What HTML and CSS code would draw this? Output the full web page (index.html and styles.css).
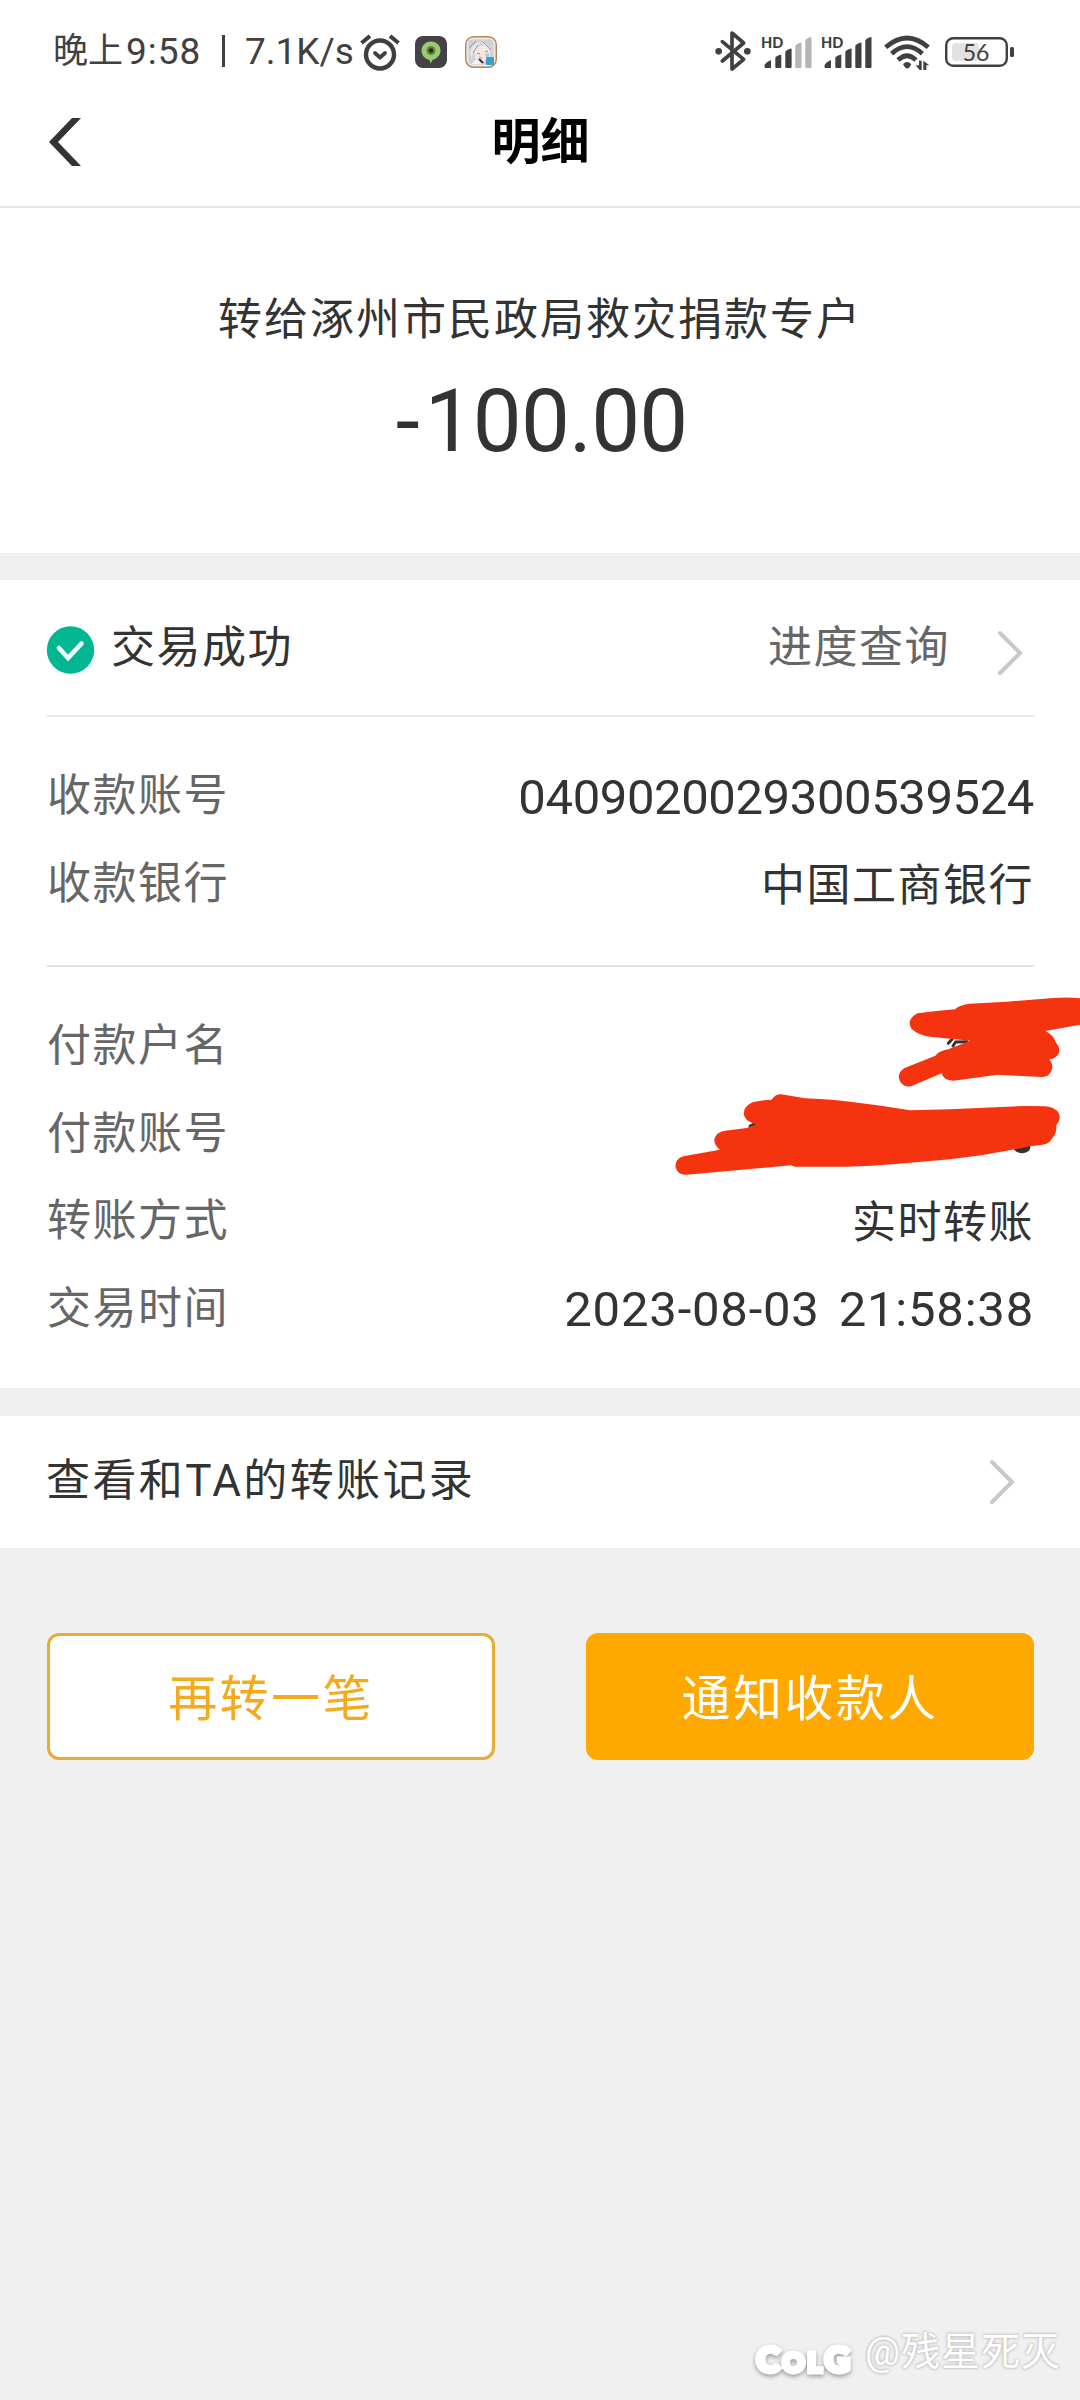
FILE: index.html
```
<!DOCTYPE html>
<html lang="zh-CN">
<head>
  <meta charset="UTF-8">
  <meta name="viewport" content="width=device-width, initial-scale=1.0">
  <title>明细</title>
  <link rel="stylesheet" href="styles.css">
</head>
<body>
  <div class="status">
    <span class="status-cn">晚上</span>
    <span class="status-time">9:58</span>
    <span class="status-sep"></span>
    <span class="status-speed">7.1K/s</span>
    <svg class="alarm" width="40" height="37" viewBox="0 0 40 37" fill="none" stroke="#404040" stroke-linecap="round" stroke-linejoin="round">
      <circle cx="20" cy="20.500" r="14" stroke-width="4.400"/>
      <path d="M15 19l5 4.500 5-4.500" stroke-width="3.800"/>
      <path d="M1.500 9l8.500-7M38.500 9l-8.500-7" stroke-width="4.200" stroke-linecap="butt"/>
    </svg>
    <svg class="app-map" width="32" height="32" viewBox="0 0 32 32">
      <rect width="32" height="32" rx="8" fill="#434246"/>
      <path d="M16 5.500c5.500 0 9.500 4 9.500 9 0 5.500-4 8-8 9.500l-2 3.500-1-3.500c-4.500-1-8-4.500-8-9.500 0-5 4-9 9.500-9z" fill="#9cc973"/>
      <circle cx="16" cy="14.500" r="4.500" fill="#5f8540"/>
      <circle cx="16" cy="14.500" r="2.200" fill="#1f2a1a"/>
    </svg>
    <svg class="app-avatar" width="32" height="32" viewBox="0 0 32 32">
      <rect x=".7" y=".7" width="30.600" height="30.600" rx="8" fill="#f3e6d6" stroke="#b08463" stroke-width="1.400"/>
      <rect x="3.500" y="3.500" width="25" height="25" rx="4" fill="#cfd0d8"/>
      <path d="M9 14q7-8 16-2v9q-7 9-15 1z" fill="#f7e6de"/>
      <path d="M5 17q2-9 10-11-2 7-7 9l-1 8zM17 6q8 2 9 11-6-3-9-11z" fill="#e9eaf0"/>
      <path d="M4 12l7-7M8 17l5-8M18 6l8 8M12 17l3 1M20 16l3-1" stroke="#9193a0" fill="none"/>
      <path d="M14 21l3 1" stroke="#d08a80"/>
      <path d="M7 28q2-5 7-5l4 5z" fill="#f1f3f8"/>
      <path d="M14 23l4 4" stroke="#2c2e38" stroke-width="2"/>
      <rect x="21" y="21" width="8" height="8" rx="1" fill="#36a2cc"/>
      <path d="M20 18l4-1v4h-3z" fill="#9fd0e4"/>
    </svg>

    <svg class="bluetooth" width="36" height="40" viewBox="105 95 108 120" fill="none" stroke="#404040" stroke-width="11" stroke-linecap="round" stroke-linejoin="round">
      <path d="M127 127l64 53-35 29V101l35 30-64 54"/>
      <circle cx="116" cy="156" r="10" fill="#404040" stroke="none"/>
      <circle cx="202" cy="156" r="10" fill="#404040" stroke="none"/>
    </svg>
    <svg class="signal" width="51" height="34" viewBox="0 0 51 34" fill="#404040">
      <text x="-1" y="12.500" class="hd">HD</text>
      <path d="M2.500 31q0-3 6.500-6v8H3.500q-1 0-1-1zM13.300 23q0-2 6-3.500v12.500q0 1-1 1h-4q-1 0-1-1zM23.300 17q1-2.500 6.300-3.500v18.500q0 1-1 1h-4.300q-1 0-1-1z"/>
      <path class="weak" d="M33.300 11q1-2.500 6.200-3.500v24.500q0 1-1 1h-4.200q-1 0-1-1zM43.300 5.500q1-2.500 6.200-3.500v30q0 1-1 1h-4.200q-1 0-1-1z"/>
    </svg>
    <svg class="signal second" width="51" height="34" viewBox="0 0 51 34" fill="#404040">
      <text x="-1" y="12.500" class="hd">HD</text>
      <path d="M2.500 31q0-3 6.500-6v8H3.500q-1 0-1-1zM13.300 23q0-2 6-3.500v12.500q0 1-1 1h-4q-1 0-1-1zM23.300 17q1-2.500 6.300-3.500v18.500q0 1-1 1h-4.300q-1 0-1-1z"/>
      <path d="M33.300 11q1-2.500 6.200-3.500v24.500q0 1-1 1h-4.200q-1 0-1-1zM43.300 5.500q1-2.500 6.200-3.500v30q0 1-1 1h-4.200q-1 0-1-1z"/>
    </svg>
    <svg class="wifi" width="46" height="36" viewBox="614 105 138 108" fill="none" stroke="#404040" stroke-width="14">
      <path d="M619 142q64-56 128 0M637 161q46-42 92 0M656 180q27-26 54 0"/>
      <path d="M671 193q12-14 25 0l-6 9q-6 7-13 0z" fill="#404040" stroke="none"/>
      <path d="M709 196h10v-14h8v28h-6zM732 182l18 14h-9v14h-9z" fill="#404040" stroke="none"/>
    </svg>
    <svg class="battery" width="70" height="32" viewBox="0 0 70 32">
      <rect x="7" y="7" width="27" height="18" rx="3" fill="#e2e2e2"/>
      <rect x="1.200" y="2.200" width="60.600" height="27.600" rx="7" fill="none" stroke="#404040" stroke-width="2.400"/>
      <rect x="65" y="11" width="4" height="10" rx="1.500" fill="#404040"/>
      <text x="31" y="24.500" text-anchor="middle" class="level">56</text>
    </svg>
  </div>

  <header class="nav">
    <svg class="back" width="32" height="48" viewBox="0 0 32 48">
      <path d="M23 0h9L9 24l23 24h-9L0 24z" fill="#333"/>
    </svg>
    <h1>明细</h1>
  </header>

  <main>
    <section class="summary">
      <p class="payee">转给涿州市民政局救灾捐款专户</p>
      <p class="amount"><span class="minus">-</span>100.00</p>
    </section>

    <section class="detail">
      <div class="state">
        <svg class="ok" width="48" height="48" viewBox="0 0 48 48">
          <circle cx="23.500" cy="24" r="23.700" fill="#00b791"/>
          <path d="M12 22l9 10L34.500 17.500" fill="none" stroke="#effffb" stroke-width="4.600" stroke-linecap="round"/>
        </svg>
        <span class="state-text">交易成功</span>
        <span class="progress">进度查询</span>
        <svg class="arrow" width="24" height="44" viewBox="0 0 24 44">
          <path d="M2 2l20 20L2 42" fill="none" stroke="#c8c8c8" stroke-width="4" stroke-linecap="round"/>
        </svg>
      </div>

      <dl class="rows receiver">
        <div><dt>收款账号</dt><dd class="num">0409020029300539524</dd></div>
        <div><dt>收款银行</dt><dd>中国工商银行</dd></div>
      </dl>

      <dl class="rows payer">
        <div><dt>付款户名</dt><dd></dd></div>
        <div><dt>付款账号</dt><dd></dd></div>
        <div><dt>转账方式</dt><dd>实时转账</dd></div>
        <div><dt>交易时间</dt><dd class="num date">2023-08-03 21:58:38</dd></div>
        <svg class="scribble" width="440" height="240" viewBox="0 0 1320 720">
          <path d="M925 250l11-12M939 258l8-12 34-1M330 498l18-8" fill="none" stroke="#333" stroke-width="9" stroke-linecap="round"/>
          <ellipse cx="1146" cy="562" rx="25" ry="18" fill="#333"/>
          <path d="M832 160Q890 152 945 148Q958 134 990 131L1100 125L1240 114Q1290 111 1320 115V194L1216 213Q1240 224 1248 248Q1262 262 1257 278Q1250 296 1228 298Q1240 312 1236 328Q1230 350 1208 351L1072 344L940 362Q910 362 905 340L815 378Q795 384 781 366Q768 342 792 325L886 287Q898 272 925 268L990 242L870 230Q836 226 815 207Q797 180 832 160Z" fill="#f5330f"/>
          <path d="M395 419Q406 402 424 403L495 415Q590 419 660 429Q735 438 810 451L930 448L1150 438L1215 439Q1247 441 1257 461Q1264 478 1249 496Q1251 520 1237 534Q1227 553 1208 554L1170 559Q1050 585 930 598L810 608Q700 618 620 620L465 620L453 616L330 627L140 644Q115 646 107 623Q103 598 130 589L240 569Q222 556 223 538Q228 516 255 512L320 504L349 493Q320 488 312 466Q308 440 338 427Q360 420 395 419Z" fill="#f5330f"/>
        </svg>
      </dl>
    </section>

    <section class="history">
      <span>查看和TA的转账记录</span>
      <svg class="arrow" width="24" height="44" viewBox="0 0 24 44">
        <path d="M2 2l20 20L2 42" fill="none" stroke="#c8c8c8" stroke-width="4" stroke-linecap="round"/>
      </svg>
    </section>

    <div class="actions">
      <button class="btn again">再转一笔</button>
      <button class="btn notify">通知收款人</button>
    </div>
  </main>

  <footer class="watermark">
    <span class="logo"><span>C</span><span class="small">O</span><span class="small">L</span><span>G</span></span>
    <span class="author">@残星死灭</span>
  </footer>
</body>
</html>
```
FILE: styles.css
```
* { box-sizing: border-box; }
body {
  margin: 0;
  height: 2400px;
  display: flex;
  flex-direction: column;
  background: #f0f0f0;
  color: #333;
  font-family: Roboto, "Noto Sans CJK SC", sans-serif;
  font-size: 44px;
  line-height: 60px;
  letter-spacing: 1.5px;
}
h1, p, dl, dd { margin: 0; }
svg { display: block; flex: none; overflow: visible; }

/* status bar */
.status { height: 104px; padding: 32px 65px 0 53px; display: flex; align-items: flex-start; background: #fff; color: #404040; font-size: 37px; line-height: 40px; letter-spacing: 0; white-space: nowrap; }
.status-cn { width: 73px; font-size: 35px; }
.status-time { width: 76px; letter-spacing: 1px; }
.status-sep { width: 3px; height: 32px; margin: 3px 20px 0 20px; background: #404040; }
.status-speed { width: 115px; }
.alarm { margin-top: 2px; }
.app-map { margin: 4px 0 0 15px; }
.app-avatar { margin: 4px 0 0 18px; }
.bluetooth { margin: -1px 0 0 auto; }
.signal { margin: 3px 0 0 11px; }
.signal.second { margin-left: 9px; }
.weak { fill: #b5b5b5; }
.hd { font: 900 14.5px Lato, sans-serif; letter-spacing: 0; }
.wifi { margin: 3px 0 0 11px; }
.battery { margin: 4px 0 0 15px; }
.level { font: 23px Lato, sans-serif; fill: #404040; letter-spacing: 0; }

/* title bar */
.nav { height: 104px; padding: 14px 48px 0 49px; display: grid; grid-template-columns: 32px 1fr 32px; background: #fff; border-bottom: 2px solid #e6e6e6; }
.nav h1 { padding-top: 1px; text-align: center; color: #000; font-size: 49px; font-weight: bold; line-height: 48px; letter-spacing: 0; }

.summary { height: 345px; padding-top: 82px; background: #fff; text-align: center; }
.payee { line-height: 60px; letter-spacing: 2px; }
.amount { margin-top: 21px; padding-left: 3px; font-size: 87px; line-height: 100px; letter-spacing: -0.8px; }
.minus { letter-spacing: 5px; }

.detail { margin-top: 27px; padding: 0 46px 0 47px; background: #fff; height: 808px; }
.state { height: 137px; padding-top: 46px; display: flex; align-items: flex-start; border-bottom: 2px solid #eaeaea; }
.state-text { margin: -8px auto 0 16px; }
.progress { margin: -8px 48px 0 0; color: #666; }
.state .arrow { margin: 5px 12px 0 0; }

.rows { position: relative; }
.rows div { height: 87.5px; display: flex; justify-content: space-between; }
dt { color: #666; }
dd { padding-top: 2px; }
.receiver { height: 250px; padding-top: 49px; border-bottom: 2px solid #e2e2e2; }
.payer { padding-top: 49px; }
.num { font-size: 49px; letter-spacing: -0.4px; }
.date { padding-top: 1px; letter-spacing: 0.8px; word-spacing: 6px; }
/* marker strokes run over the payer values to the screen edge */
.scribble { position: absolute; top: -7px; right: -46px; }

.history { margin-top: 28px; height: 132px; padding: 35px 66px 0 46px; display: flex; justify-content: space-between; background: #fff; letter-spacing: 2.4px; }
.history .arrow { margin-top: 9px; }

.actions { padding: 85px 46px 0 47px; display: flex; justify-content: space-between; }
.btn { width: 448px; height: 127px; padding: 6px 0 0; border: 3px solid #ffa800; border-radius: 12px; font: inherit; font-size: 49px; letter-spacing: 2.4px; }
.again { background: #fff; color: #f3aa1c; border-color: #e5ac38; }
.notify { background: #ffa800; color: #fff; }

.watermark { margin-top: auto; height: 74px; padding-right: 19px; display: flex; justify-content: flex-end; color: #fff; white-space: nowrap; line-height: 48px; }
.logo { margin: 8px 12px 0 0; font-family: Lato, sans-serif; font-weight: 900; font-size: 35px; letter-spacing: 3px; -webkit-text-stroke: 5px #fff; filter: drop-shadow(0 2px 2px #999); }
.logo .small { font-size: 27px; }
.author { padding-top: 2px; font-size: 39px; letter-spacing: 1px; text-shadow: 0 0 3px #bbb, 0 0 3px #bbb; }
```
